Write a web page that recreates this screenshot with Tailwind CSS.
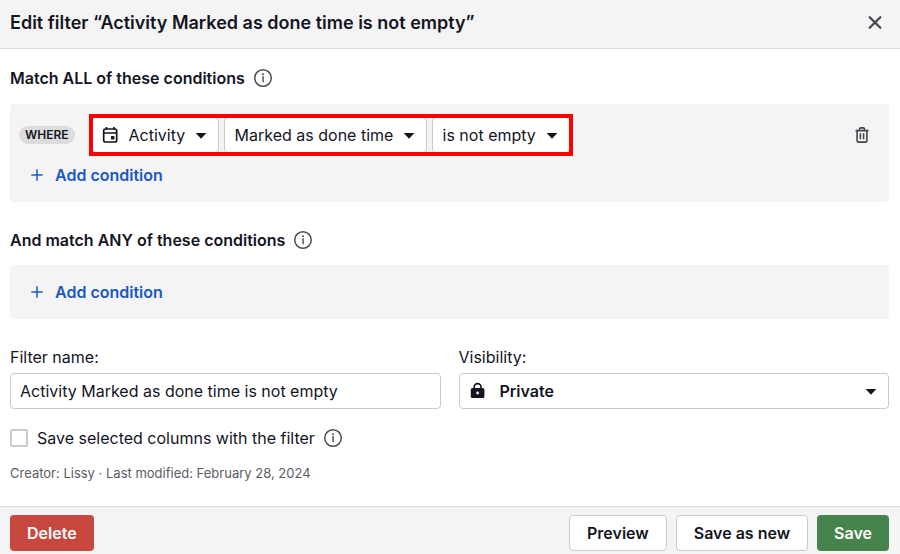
<!DOCTYPE html>
<html lang="en">
<head>
    <meta charset="UTF-8">
    <meta name="viewport" content="width=device-width, initial-scale=1.0">
    <title>Edit filter</title>
    <script src="https://cdn.jsdelivr.net/npm/@tailwindcss/browser@4"></script>
</head>
<body class="bg-white font-['Inter',sans-serif] text-base text-[#14151f]">
    <div class="flex min-h-screen flex-col">
        <header class="flex items-center justify-between border-b border-[#d9d9da] bg-[#f4f4f4] pt-[9px] pr-4 pb-[11px] pl-2.5">
            <h1 class="text-lg leading-7 font-semibold">Edit filter “Activity Marked as done time is not empty”</h1>
            <button type="button" aria-label="Close" class="text-[#43444c]">
                <svg class="size-[18px]" viewBox="0 0 18 18" fill="none" stroke="currentColor" stroke-width="2.2" stroke-linecap="round"><path d="M3.7 3.2l10.6 10.6M14.3 3.2L3.7 13.8"/></svg>
            </button>
        </header>

        <main class="flex-1 pt-[17px] pr-[11px] pl-2.5">
            <section>
                <div class="flex items-center gap-2">
                    <h2 class="leading-6 font-semibold">Match ALL of these conditions</h2>
                    <svg class="size-5 text-[#4c4d55]" viewBox="0 0 20 20" fill="none" stroke="currentColor"><circle cx="10" cy="10" r="8.3" stroke-width="1.5"/><path d="M9.2 9h.9v5.2" stroke-width="1.4"/><circle cx="10" cy="6.3" r="1" fill="currentColor" stroke="none"/></svg>
                </div>
                <div class="mt-3.5 rounded bg-[#f4f4f4] pt-[13px] pb-2.5">
                    <div class="flex items-center pr-[18px] pl-[9px]">
                        <span class="mr-[17px] rounded-full bg-[#dcdcdd] px-1.5 text-xs leading-[18px] font-semibold">WHERE</span>
                        <!-- condition pickers, outlined in red -->
                        <div class="relative flex gap-[5px]">
                            <div class="relative">
                                <svg class="pointer-events-none absolute top-2 left-2 size-5" viewBox="0 0 20 20" fill="none" stroke="currentColor" stroke-width="1.7"><rect x="3.7" y="4" width="13" height="13" rx="1.8"/><path d="M3.7 8h13M6.5 2v2.5M13.9 2v2.5"/><rect x="11" y="11" width="3.4" height="3.4" rx=".5" fill="currentColor" stroke="none"/></svg>
                                <select aria-label="Item" class="h-9 appearance-none rounded border border-[#cbcbcd] bg-white pr-8 pl-9">
                                    <option>Activity</option>
                                </select>
                                <svg class="pointer-events-none absolute top-4 right-3 h-1.5 w-3" viewBox="0 0 12 6" fill="currentColor"><path d="M.6 0h10.8L6 5.8z"/></svg>
                            </div>
                            <div class="relative">
                                <select aria-label="Field" class="h-9 appearance-none rounded border border-[#cbcbcd] bg-white pr-8 pl-2.5">
                                    <option>Marked as done time</option>
                                </select>
                                <svg class="pointer-events-none absolute top-4 right-3 h-1.5 w-3" viewBox="0 0 12 6" fill="currentColor"><path d="M.6 0h10.8L6 5.8z"/></svg>
                            </div>
                            <div class="relative">
                                <select aria-label="Operator" class="h-9 appearance-none rounded border border-[#cbcbcd] bg-white pr-8 pl-2.5">
                                    <option>is not empty</option>
                                </select>
                                <svg class="pointer-events-none absolute top-4 right-3 h-1.5 w-3" viewBox="0 0 12 6" fill="currentColor"><path d="M.6 0h10.8L6 5.8z"/></svg>
                            </div>
                            <div class="pointer-events-none absolute -inset-[3px] border-4 border-[#ff0000]"></div>
                        </div>
                        <button type="button" aria-label="Remove condition" class="ml-auto text-[#43444c]">
                            <svg class="size-[18px]" viewBox="0 0 18 18" fill="none" stroke="currentColor" stroke-width="1.6"><path d="M2.5 4.6h13M6.5 4.4V3.2c0-.8.5-1.3 1.3-1.3h2.4c.8 0 1.3.5 1.3 1.3v1.2M4.1 4.6v10.1c0 .9.5 1.4 1.4 1.4h7c.9 0 1.4-.5 1.4-1.4V4.6M7.4 7.2v6M10.6 7.2v6"/></svg>
                        </button>
                    </div>
                    <button type="button" class="mt-[5px] ml-5 flex h-[34px] items-center gap-[11px] font-semibold text-[#1b58c4]">
                        <svg class="size-3.5" viewBox="0 0 14 14" fill="none" stroke="currentColor" stroke-width="1.5"><path d="M7 1.3v11.4M1.3 7h11.4"/></svg>
                        Add condition
                    </button>
                </div>
            </section>

            <section class="mt-[26px]">
                <div class="flex items-center gap-2">
                    <h2 class="leading-6 font-semibold">And match ANY of these conditions</h2>
                    <svg class="size-5 text-[#4c4d55]" viewBox="0 0 20 20" fill="none" stroke="currentColor"><circle cx="10" cy="10" r="8.3" stroke-width="1.5"/><path d="M9.2 9h.9v5.2" stroke-width="1.4"/><circle cx="10" cy="6.3" r="1" fill="currentColor" stroke="none"/></svg>
                </div>
                <div class="mt-[13px] rounded bg-[#f4f4f4] py-2.5">
                    <button type="button" class="ml-5 flex h-[34px] items-center gap-[11px] font-semibold text-[#1b58c4]">
                        <svg class="size-3.5" viewBox="0 0 14 14" fill="none" stroke="currentColor" stroke-width="1.5"><path d="M7 1.3v11.4M1.3 7h11.4"/></svg>
                        Add condition
                    </button>
                </div>
            </section>

            <div class="mt-[26px] grid grid-cols-2 gap-[18px]">
                <div>
                    <label for="filterName" class="block leading-6">Filter name:</label>
                    <input type="text" id="filterName" value="Activity Marked as done time is not empty" class="mt-1 block h-9 w-full rounded border border-[#cbcbcd] bg-white px-[9px]">
                </div>
                <div>
                    <label for="visibility" class="block leading-6">Visibility:</label>
                    <div class="relative mt-1">
                        <svg class="pointer-events-none absolute top-2 left-2.5 size-[18px]" viewBox="0 0 18 18"><rect x="1.8" y="7" width="13.6" height="10" rx="1.6" fill="currentColor"/><path d="M5.2 8V6a3.4 3.4 0 0 1 6.8 0v2" fill="none" stroke="currentColor" stroke-width="1.6"/><circle cx="8.6" cy="12" r="1.4" fill="#fff"/></svg>
                        <select id="visibility" class="block h-9 w-full appearance-none rounded border border-[#cbcbcd] bg-white pr-9 pl-10 font-semibold">
                            <option>Private</option>
                        </select>
                        <svg class="pointer-events-none absolute top-4 right-3 h-1.5 w-3" viewBox="0 0 12 6" fill="currentColor"><path d="M.6 0h10.8L6 5.8z"/></svg>
                    </div>
                </div>
            </div>

            <div class="mt-[17px] flex items-center gap-2">
                <label for="saveColumns" class="flex items-center gap-[9px] leading-6">
                    <input type="checkbox" id="saveColumns" class="size-[18px] appearance-none rounded-xs border-2 border-[#cbcbcd] bg-white checked:bg-[#1b58c4]">
                    Save selected columns with the filter
                </label>
                <svg class="size-5 text-[#4c4d55]" viewBox="0 0 20 20" fill="none" stroke="currentColor"><circle cx="10" cy="10" r="8.3" stroke-width="1.5"/><path d="M9.2 9h.9v5.2" stroke-width="1.4"/><circle cx="10" cy="6.3" r="1" fill="currentColor" stroke="none"/></svg>
            </div>
            <p class="mt-[13px] pb-[22px] text-[13px] leading-5 text-[#5b5c64]">Creator: Lissy · Last modified: February 28, 2024</p>
        </main>

        <footer class="flex items-center gap-[9px] border-t border-[#d9d9da] bg-[#f4f4f4] pt-2 pr-[11px] pb-[3px] pl-2.5 font-semibold">
            <button type="button" class="mr-auto h-9 rounded bg-[#c8483f] px-[17px] text-white">Delete</button>
            <button type="button" class="h-9 rounded border border-[#cbcbcd] bg-white px-[17px]">Preview</button>
            <button type="button" class="h-9 rounded border border-[#cbcbcd] bg-white px-[17px]">Save as new</button>
            <button type="button" class="h-9 rounded bg-[#47834c] px-[17px] text-white">Save</button>
        </footer>
    </div>
</body>
</html>
